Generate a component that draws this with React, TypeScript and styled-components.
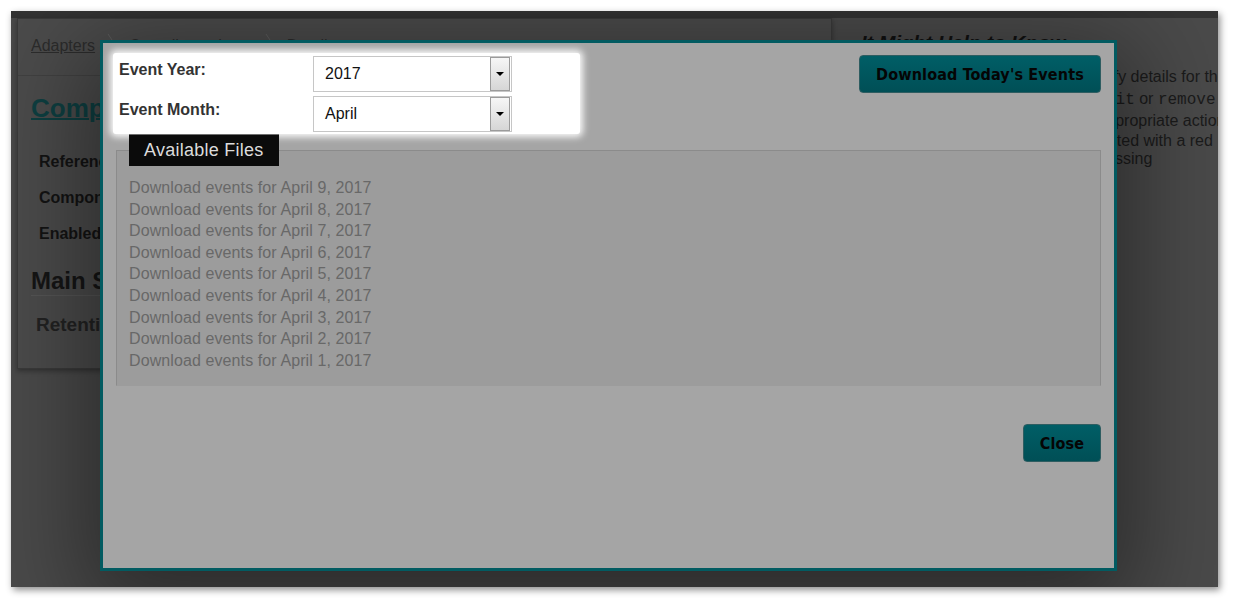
import styled, { createGlobalStyle } from 'styled-components';

const GlobalStyle = createGlobalStyle`
    html, body {
        margin: 0;
        padding: 0;
        background: #ffffff;
    }
    body {
        font-family: "Liberation Sans", Arial, sans-serif;
    }
    #root {
        padding: 11px;
    }
`;

// The screenshot itself: dimmed page behind a modal.
const Frame = styled.div`
    position: relative;
    width: 1207px;
    height: 576px;
    overflow: hidden;
    background: #4a4a4a;
    box-shadow: 2px 3px 7px rgba(0, 0, 0, 0.45);
    display: flex;
    flex-direction: column;
`;

const TopStrip = styled.div`
    height: 7px;
    background: #333333;
`;

const PageBody = styled.div`
    display: flex;
    align-items: flex-start;
`;

const Card = styled.div`
    box-sizing: border-box;
    flex-shrink: 0;
    width: 815px;
    height: 351px;
    margin-left: 6px;
    background: #4b4b4b;
    border: 1px solid #3a3a3a;
    box-shadow: 0 2px 5px rgba(0, 0, 0, 0.35);
`;

const Breadcrumb = styled.div`
    display: flex;
    align-items: center;
    gap: 12px;
    padding: 15px 13px 17px;
    border-bottom: 1px solid #414141;
    font-size: 16px;
    line-height: 20px;
    white-space: nowrap;
`;

const Crumb = styled.a`
    color: #2c2c2c;
    text-decoration: underline;
`;

const Chevron = () => (
    <svg width="10" height="24" viewBox="0 0 10 24">
        <polyline points="1,0 9,12 1,24" fill="none" stroke="#5e5e5e" strokeWidth="1" />
    </svg>
);

const Title = styled.h1`
    margin: 17px 13px 0;
    font-size: 26px;
    line-height: 30px;
    font-weight: bold;
    color: #0e3f41;
    text-decoration: underline;
    text-decoration-thickness: 2px;
    white-space: nowrap;
`;

const Fields = styled.div`
    margin-top: 30px;
    padding-left: 21px;
`;

const FieldLabel = styled.div`
    height: 36px;
    font-size: 16px;
    line-height: 18px;
    font-weight: bold;
    color: #131313;
`;

const SectionTitle = styled.h2`
    margin: 6px 13px 0;
    font-size: 24px;
    line-height: 28px;
    font-weight: bold;
    color: #151515;
    border-bottom: 1px solid #555555;
`;

const SubTitle = styled.h3`
    margin: 18px 18px 0;
    font-size: 19px;
    line-height: 22px;
    font-weight: bold;
    color: #222222;
`;

const Sidebar = styled.div`
    flex: 1;
    min-width: 0;
    padding-left: 29px;
    color: #1b1b1b;
    white-space: nowrap;
`;

const SideTitle = styled.h3`
    margin: 13px 0 11px;
    font-size: 20px;
    line-height: 24px;
    font-weight: bold;
    font-style: italic;
    color: #111111;
`;

const SideLine = styled.div<{ $height: number; $indent: number }>`
    height: ${(p) => p.$height}px;
    line-height: ${(p) => p.$height}px;
    font-size: 16px;
    text-indent: ${(p) => p.$indent}px;
`;

const Code = styled.code`
    font-family: "Liberation Mono", "Courier New", monospace;
    font-size: 16px;
`;

// Modal dialog that sits over the page.
const Modal = styled.div`
    position: absolute;
    left: 89px;
    top: 29px;
    box-sizing: border-box;
    width: 1017px;
    height: 531px;
    border: 3px solid #025b61;
    background: #a5a5a5;
    box-shadow: 0 24px 90px 18px rgba(0, 0, 0, 0.42);
    display: flex;
    flex-direction: column;
`;

const TopRow = styled.div`
    display: flex;
    justify-content: space-between;
    align-items: flex-start;
    padding: 10px 13px 0 10px;
`;

const FormPanel = styled.div`
    box-sizing: border-box;
    width: 467px;
    padding: 3px 0 2px 6px;
    background: #ffffff;
    border-radius: 3px;
    box-shadow: 0 0 7px 3px rgba(255, 255, 255, 0.95);
    display: grid;
    grid-template-columns: 194px 199px;
    row-gap: 4px;
`;

const FormLabel = styled.label`
    padding-top: 5px;
    font-size: 16px;
    line-height: 18px;
    font-weight: bold;
    color: #333333;
`;

const Select = styled.div`
    box-sizing: border-box;
    height: 36px;
    display: flex;
    align-items: center;
    border: 1px solid #c6c6c6;
    background: #ffffff;
`;

const SelectValue = styled.span`
    flex: 1;
    padding-left: 11px;
    font-size: 16px;
    color: #111111;
`;

const SelectArrow = styled.span`
    box-sizing: border-box;
    width: 20px;
    height: 34px;
    margin-right: 1px;
    display: flex;
    align-items: center;
    justify-content: center;
    border: 1px solid #9b9b9b;
    background: linear-gradient(#f6f6f6, #d6d6d6);

    &::after {
        content: '';
        width: 0;
        height: 0;
        border-left: 4px solid transparent;
        border-right: 4px solid transparent;
        border-top: 4px solid #000000;
    }
`;

const TealButton = styled.button`
    box-sizing: border-box;
    height: 38px;
    padding: 0 8px;
    border: 1px solid #2e5d61;
    border-radius: 4px;
    background: linear-gradient(#005e66, #004f56);
    color: #050505;
    font-family: "DejaVu Sans Condensed", "DejaVu Sans", sans-serif;
    font-stretch: condensed;
    font-weight: bold;
    font-size: 16px;
    letter-spacing: 0.15px;
    white-space: nowrap;
`;

const DownloadButton = styled(TealButton)`
    width: 242px;
    margin-top: 2px;
`;

const FilesBox = styled.fieldset`
    margin: 0 13px;
    padding: 0 12px 14px;
    border: 1px solid #8b8b8b;
    border-bottom-color: #9c9c9c;
    background: #9c9c9c;
`;

const FilesLegend = styled.legend`
    box-sizing: border-box;
    height: 32px;
    margin: 0;
    padding: 0 16px 0 15px;
    background: #0b0b0b;
    border-top: 1px solid #6e6e6e;
    color: #dcdcdc;
    font-size: 18px;
    letter-spacing: 0.25px;
    line-height: 31px;
`;

const FileList = styled.div`
    margin-top: 11px;
`;

const FileLink = styled.a`
    display: block;
    font-size: 16px;
    line-height: 21.6px;
    letter-spacing: 0.1px;
    color: #686868;
    text-decoration: none;
`;

const Footer = styled.div`
    display: flex;
    justify-content: flex-end;
    padding: 38px 13px 0;
`;

const CloseButton = styled(TealButton)`
    width: 78px;
`;

const days = [9, 8, 7, 6, 5, 4, 3, 2, 1];

export default function App() {
    return (
        <>
            <GlobalStyle />
            <Frame>
                <TopStrip />
                <PageBody>
                    <Card>
                        <Breadcrumb>
                            <Crumb>Adapters</Crumb>
                            <Chevron />
                            <Crumb>Compliance Logs</Crumb>
                            <Chevron />
                            <Crumb>Details</Crumb>
                        </Breadcrumb>
                        <Title>Compliance Adapter</Title>
                        <Fields>
                            <FieldLabel>Reference</FieldLabel>
                            <FieldLabel>Component</FieldLabel>
                            <FieldLabel>Enabled</FieldLabel>
                        </Fields>
                        <SectionTitle>Main Settings</SectionTitle>
                        <SubTitle>Retention</SubTitle>
                    </Card>
                    <Sidebar>
                        <SideTitle>It Might Help to Know</SideTitle>
                        <SideLine $height={22} $indent={-15}>
                            Use this page to view and easily modify details for the adapter.
                        </SideLine>
                        <SideLine $height={22} $indent={-3}>
                            Select any component, then click <Code>edit</Code> or <Code>remove</Code>
                        </SideLine>
                        <SideLine $height={22} $indent={6}>
                            to open its settings and take the appropriate action.
                        </SideLine>
                        <SideLine $height={18} $indent={5}>
                            Any required fields that are highlighted with a red
                        </SideLine>
                        <SideLine $height={18} $indent={5}>
                            border or a warning icon are still missing
                        </SideLine>
                    </Sidebar>
                </PageBody>

                <Modal>
                    <TopRow>
                        <FormPanel>
                            <FormLabel>Event Year:</FormLabel>
                            <Select>
                                <SelectValue>2017</SelectValue>
                                <SelectArrow />
                            </Select>
                            <FormLabel>Event Month:</FormLabel>
                            <Select>
                                <SelectValue>April</SelectValue>
                                <SelectArrow />
                            </Select>
                        </FormPanel>
                        <DownloadButton>Download Today's Events</DownloadButton>
                    </TopRow>

                    <FilesBox>
                        <FilesLegend>Available Files</FilesLegend>
                        <FileList>
                            {days.map((d) => (
                                <FileLink key={d}>Download events for April {d}, 2017</FileLink>
                            ))}
                        </FileList>
                    </FilesBox>

                    <Footer>
                        <CloseButton>Close</CloseButton>
                    </Footer>
                </Modal>
            </Frame>
        </>
    );
}
